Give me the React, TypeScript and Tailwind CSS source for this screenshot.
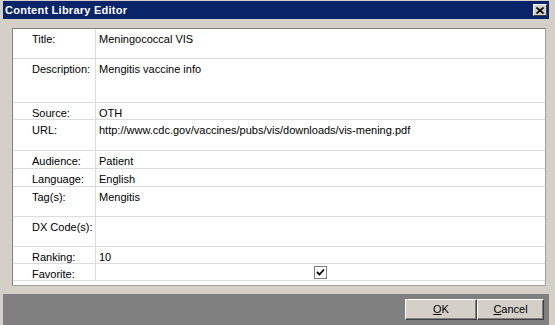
import React from 'react';

type Row = { label: string; value?: string; h: string; check?: boolean };

const rows: Row[] = [
  { label: 'Title:', value: 'Meningococcal VIS', h: 'h-[30px]' },
  { label: 'Description:', value: 'Mengitis vaccine info', h: 'h-[44px]' },
  { label: 'Source:', value: 'OTH', h: 'h-[17px]' },
  { label: 'URL:', value: 'http://www.cdc.gov/vaccines/pubs/vis/downloads/vis-mening.pdf', h: 'h-[31px]' },
  { label: 'Audience:', value: 'Patient', h: 'h-[18px]' },
  { label: 'Language:', value: 'English', h: 'h-[18px]' },
  { label: 'Tag(s):', value: 'Mengitis', h: 'h-[30px]' },
  { label: 'DX Code(s):', value: '', h: 'h-[30px]' },
  { label: 'Ranking:', value: '10', h: 'h-[17px]' },
  { label: 'Favorite:', h: 'h-[17px]', check: true },
];

function CheckBox() {
  return (
    <div className="w-[13px] h-[13px] border border-[#7f7f7f] bg-white flex items-center justify-center">
      <svg width="9" height="9" viewBox="0 0 9 9">
        <path d="M1 4 L3.5 6.5 L8 1.5" stroke="#000" strokeWidth="1.8" fill="none" />
      </svg>
    </div>
  );
}

function Button({ children }: { children: React.ReactNode }) {
  return (
    <button className="h-[21px] bg-[#d4d0c8] border border-t-white border-l-white border-r-[#404040] border-b-[#404040] shadow-[inset_-1px_-1px_0_#808080] text-[11px] text-black">
      {children}
    </button>
  );
}

export default function App() {
  return (
    <div
      className="w-[555px] h-[325px] bg-[#d4d0c8] pl-[3px] pr-[6px] pt-[1px] flex flex-col overflow-hidden"
      style={{ fontFamily: '"Liberation Sans", Arial, sans-serif' }}
    >
      {/* Title bar */}
      <div className="h-[18px] bg-[#0a246a] flex items-center justify-between pl-[2px] pr-[2px]">
        <span className="text-white font-bold text-[11px] tracking-[0.25px]">Content Library Editor</span>
        <div className="w-[14px] h-[12px] bg-[#d4d0c8] border border-t-white border-l-white border-r-[#404040] border-b-[#404040] flex items-center justify-center">
          <svg width="8" height="7" viewBox="0 0 8 7">
            <path d="M0.5 0.5 L7.5 6.5 M7.5 0.5 L0.5 6.5" stroke="#000" strokeWidth="1.6" />
          </svg>
        </div>
      </div>

      {/* Form panel */}
      <div className="pt-[9px] pl-[9px] pr-[3px] pb-[8px]">
        <div className="h-[258px] bg-white border border-t-[#808080] border-l-[#808080] border-r-[#a0a0a0] border-b-[#a0a0a0] text-[11px] text-black">
          {rows.map((r) => (
            <div key={r.label} className={`${r.h} flex border-b border-[#dcdcdc]`}>
              <div className="w-[83px] pl-[19px] pt-[2px] border-r border-[#dcdcdc]">{r.label}</div>
              {r.check ? (
                <div className="flex-1 flex justify-center items-center">
                  <CheckBox />
                </div>
              ) : (
                <div className="flex-1 pl-[3px] pt-[2px]">{r.value}</div>
              )}
            </div>
          ))}
        </div>
      </div>

      {/* Footer */}
      <div className="flex-1 bg-[#808080] flex justify-end items-start gap-[2px] pt-[5px] pr-[5px]">
        <div className="w-[70px] flex">
          <Button>
            <span className="block w-[70px]"><u>O</u>K</span>
          </Button>
        </div>
        <div className="w-[67px] flex">
          <Button>
            <span className="block w-[65px]"><u>C</u>ancel</span>
          </Button>
        </div>
      </div>
    </div>
  );
}
